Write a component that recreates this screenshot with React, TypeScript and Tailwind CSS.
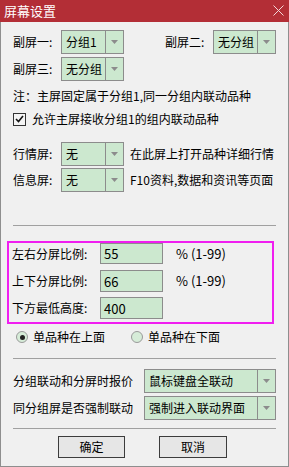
import React from 'react';

function Arrow() {
  return (
    <svg width="7" height="4" viewBox="0 0 7 4">
      <path d="M0 0h7L3.5 4z" fill="#8c8c8c" />
    </svg>
  );
}

function Combo({ text, width }: { text: string; width: string }) {
  return (
    <div className={`${width} h-[24px] flex border border-[#8c8c8c] bg-[#cce8cf]`}>
      <div className="flex-1 flex items-center pl-[4px] text-[12px] leading-none whitespace-nowrap">{text}</div>
      <div className="w-[18px] flex items-center justify-center border-l border-[#8c8c8c]">
        <Arrow />
      </div>
    </div>
  );
}

function Radio({ checked }: { checked?: boolean }) {
  return (
    <div className="w-[12px] h-[12px] rounded-full border border-[#9a9a9a] bg-[#d6ecd8] flex items-center justify-center">
      {checked && <div className="w-[5px] h-[5px] rounded-full bg-[#222]" />}
    </div>
  );
}

function RatioRow({ label, value, unit, h, className }: { label: string; value: string; unit?: string; h: string; className?: string }) {
  return (
    <div className={`flex items-center ${className ?? ''}`}>
      <div className="w-[88px]">{label}</div>
      <div className={`w-[63px] ${h} border border-[#8c8c8c] bg-[#cce8cf] flex items-center pl-[3px] text-[13px] leading-none`}>
        {value}
      </div>
      {unit && <div className="ml-[13px] text-[13px]">{unit}</div>}
    </div>
  );
}

export default function App() {
  return (
    <div className="w-[289px] h-[467px] flex flex-col bg-[#f0f0f0] text-black text-[12px] leading-[16px] font-['Noto_Sans_CJK_SC','Noto_Sans',sans-serif]">
      {/* 标题栏 */}
      <div className="h-[22px] bg-[#b32e36] flex items-center justify-between pl-[4px] pr-[5px] text-white">
        <span className="text-[13px]">屏幕设置</span>
        <svg width="11" height="11" viewBox="0 0 11 11" className="mb-[2px]">
          <path d="M0.5 0.5l10 10M10.5 0.5l-10 10" stroke="#f3d6d8" strokeWidth="1" />
        </svg>
      </div>

      <div className="flex-1 flex flex-col border-x border-b border-[#8e8e8e] px-[12px]">
        <div className="mt-[8px] h-[24px] flex items-center justify-between">
          <div className="flex items-center">
            <div className="w-[48px]">副屏一:</div>
            <Combo text="分组1" width="w-[63px]" />
          </div>
          <div className="flex items-center">
            <div className="w-[48px]">副屏二:</div>
            <Combo text="无分组" width="w-[63px]" />
          </div>
        </div>
        <div className="mt-[3px] h-[24px] flex items-center">
          <div className="w-[48px]">副屏三:</div>
          <Combo text="无分组" width="w-[63px]" />
        </div>

        <div className="mt-[7px]">注：主屏固定属于分组1,同一分组内联动品种</div>

        <div className="mt-[7px] h-[16px] flex items-center">
          <div className="w-[13px] h-[13px] border border-[#333] bg-[#f4f4f4] flex items-center justify-center">
            <svg width="9" height="8" viewBox="0 0 9 8">
              <path d="M1 4l2.5 2.5L8 1" stroke="#111" strokeWidth="1.6" fill="none" />
            </svg>
          </div>
          <span className="ml-[6px]">允许主屏接收分组1的组内联动品种</span>
        </div>

        <div className="mt-[15px] h-[24px] flex items-center">
          <div className="w-[48px]">行情屏:</div>
          <Combo text="无" width="w-[63px]" />
          <span className="ml-[6px]">在此屏上打开品种详细行情</span>
        </div>
        <div className="mt-[2px] h-[24px] flex items-center">
          <div className="w-[48px]">信息屏:</div>
          <Combo text="无" width="w-[63px]" />
          <span className="ml-[6px]">F10资料,数据和资讯等页面</span>
        </div>

        <div className="mt-[33px] h-px bg-[#a0a0a0]" />

        <div className="mt-[15px] -ml-[6px] w-[267px] border-2 border-[#f01ef0] pl-[3px] pb-[3px] flex flex-col">
          <RatioRow label="左右分屏比例:" value="55" unit="% (1-99)" h="h-[21px]" />
          <RatioRow label="上下分屏比例:" value="66" unit="% (1-99)" h="h-[22px]" className="mt-[6px]" />
          <RatioRow label="下方最低高度:" value="400" h="h-[22px]" className="mt-[5px]" />
        </div>

        <div className="mt-[5px] h-[16px] flex items-center">
          <div className="ml-[3px]"><Radio checked /></div>
          <span className="ml-[5px]">单品种在上面</span>
          <div className="ml-[26px]"><Radio /></div>
          <span className="ml-[5px]">单品种在下面</span>
        </div>

        <div className="mt-[13px] h-px bg-[#a0a0a0]" />

        <div className="mt-[10px] h-[24px] flex items-center justify-between">
          <span>分组联动和分屏时报价</span>
          <Combo text="鼠标键盘全联动" width="w-[132px]" />
        </div>
        <div className="mt-[3px] h-[24px] flex items-center justify-between">
          <span>同分组屏是否强制联动</span>
          <Combo text="强制进入联动界面" width="w-[132px]" />
        </div>

        <div className="mt-[8px] h-px bg-[#a0a0a0]" />

        <div className="mt-[7px] flex gap-[34px] ml-[45px]">
          <button className="w-[67px] h-[22px] border border-[#3c3c3c] bg-[#e6e6e6] text-[12px]">确定</button>
          <button className="w-[68px] h-[22px] border border-[#3c3c3c] bg-[#e6e6e6] text-[12px]">取消</button>
        </div>
      </div>
    </div>
  );
}
